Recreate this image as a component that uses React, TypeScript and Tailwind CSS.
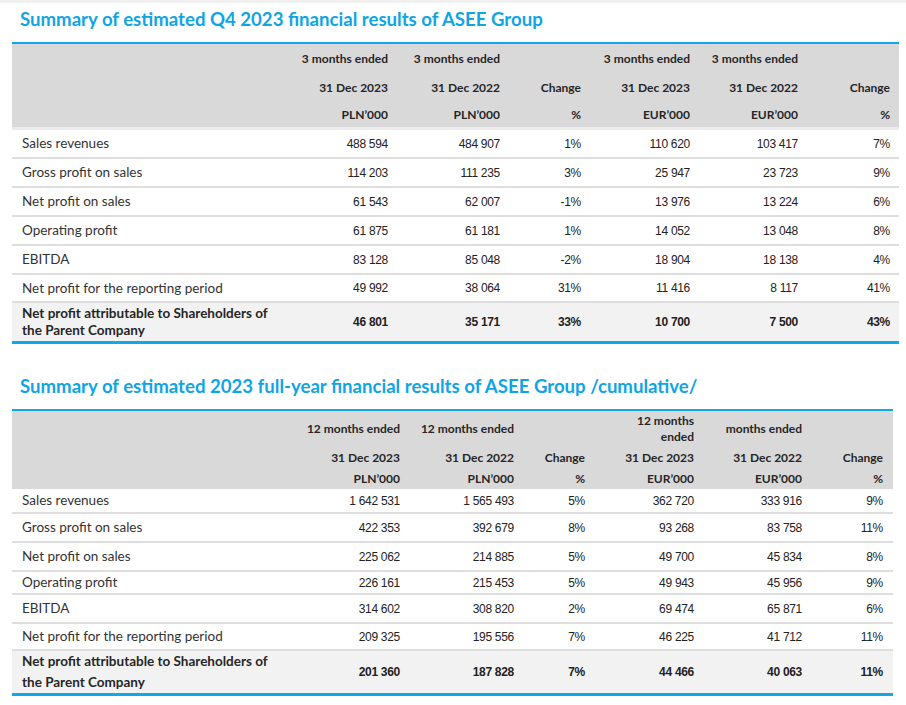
import React from "react";

/* ==== data ==== */

type Row = { label: string; v: string[]; bold?: boolean };

const q4Rows: Row[] = [
  { label: "Sales revenues", v: ["488 594", "484 907", "1%", "110 620", "103 417", "7%"] },
  { label: "Gross profit on sales", v: ["114 203", "111 235", "3%", "25 947", "23 723", "9%"] },
  { label: "Net profit on sales", v: ["61 543", "62 007", "-1%", "13 976", "13 224", "6%"] },
  { label: "Operating profit", v: ["61 875", "61 181", "1%", "14 052", "13 048", "8%"] },
  { label: "EBITDA", v: ["83 128", "85 048", "-2%", "18 904", "18 138", "4%"] },
  { label: "Net profit for the reporting period", v: ["49 992", "38 064", "31%", "11 416", "8 117", "41%"] },
];

const fyRows: Row[] = [
  { label: "Sales revenues", v: ["1 642 531", "1 565 493", "5%", "362 720", "333 916", "9%"] },
  { label: "Gross profit on sales", v: ["422 353", "392 679", "8%", "93 268", "83 758", "11%"] },
  { label: "Net profit on sales", v: ["225 062", "214 885", "5%", "49 700", "45 834", "8%"] },
  { label: "Operating profit", v: ["226 161", "215 453", "5%", "49 943", "45 956", "9%"] },
  { label: "EBITDA", v: ["314 602", "308 820", "2%", "69 474", "65 871", "6%"] },
  { label: "Net profit for the reporting period", v: ["209 325", "195 556", "7%", "46 225", "41 712", "11%"] },
];

// row heights include the 2px bottom rule
const q4Heights = ["h-[29px]", "h-[29px]", "h-[29px]", "h-[29px]", "h-[29px]", "h-[28px]"];
const fyHeights = ["h-[25px]", "h-[29px]", "h-[29px]", "h-[23px]", "h-[29px]", "h-[27px]"];

const cols1 = "grid grid-cols-[288px_88px_112px_81px_109px_108px_92px]";
const cols2 = "grid grid-cols-[288px_100px_114px_71px_109px_108px_81px]";

const title = "font-['Lato',sans-serif] font-bold text-[#0fa5e4] text-[18.6px] leading-none pl-[20px]";
const head = "font-['Lato',sans-serif] font-bold text-[12px] text-[#262626] text-right";
const num = "font-['Liberation_Sans',Arial,sans-serif] text-[12px] tracking-[-0.3px] text-[#222] text-right";
const lbl = "font-['Lato',sans-serif] text-[13.5px] text-[#333] pl-[10px]";

const DataRows: React.FC<{ rows: Row[]; cols: string; heights: string[] }> = ({ rows, cols, heights }) => (
  <>
    {rows.map((r, i) => (
      <div key={r.label} className={`${cols} items-center border-b-2 border-[#dedede] ${heights[i]}`}>
        <div className={lbl}>{r.label}</div>
        {r.v.map((x, j) => (
          <div key={j} className={num}>
            {x}
          </div>
        ))}
      </div>
    ))}
  </>
);

const TotalRow: React.FC<{ v: string[]; cols: string; h: string; lh: string }> = ({ v, cols, h, lh }) => (
  <div className={`${cols} items-center bg-[#f2f2f2] border-b-[3px] border-[#12a7e6] ${h}`}>
    <div className={`${lbl} font-bold text-[#262626] ${lh}`}>
      Net profit attributable to Shareholders of
      <br />
      the Parent Company
    </div>
    {v.map((x, j) => (
      <div key={j} className={`${num} font-bold`}>
        {x}
      </div>
    ))}
  </div>
);

export default function App() {
  return (
    <div className="w-[906px] h-[705px] bg-white border-t-[3px] border-[#f1f1f1] overflow-hidden">
      {/* ==== Q4 ==== */}
      <div className={`${title} pt-[7px] h-[39px]`}>
        Summary of estimated Q4 2023 financial results of ASEE Group
      </div>
      <div className="ml-[12px] w-[887px] border-t-2 border-[#12a7e6]">
        <div className="bg-[#d9d9d9] border-b-[3px] border-[#ececec]">
          <div className={`${cols1} items-center h-[29px]`}>
            <div />
            <div className={head}>3 months ended</div>
            <div className={head}>3 months ended</div>
            <div />
            <div className={head}>3 months ended</div>
            <div className={head}>3 months ended</div>
            <div />
          </div>
          <div className={`${cols1} items-center h-[29px]`}>
            <div />
            <div className={head}>31 Dec 2023</div>
            <div className={head}>31 Dec 2022</div>
            <div className={head}>Change</div>
            <div className={head}>31 Dec 2023</div>
            <div className={head}>31 Dec 2022</div>
            <div className={head}>Change</div>
          </div>
          <div className={`${cols1} items-center h-[25px]`}>
            <div />
            <div className={head}>PLN’000</div>
            <div className={head}>PLN’000</div>
            <div className={head}>%</div>
            <div className={head}>EUR’000</div>
            <div className={head}>EUR’000</div>
            <div className={head}>%</div>
          </div>
        </div>
        <DataRows rows={q4Rows} cols={cols1} heights={q4Heights} />
        <TotalRow
          cols={cols1}
          h="h-[41px]"
          lh="leading-[17px]"
          v={["46 801", "35 171", "33%", "10 700", "7 500", "43%"]}
        />
      </div>

      {/* ==== FULL YEAR ==== */}
      <div className={`${title} pt-[33px] h-[65px]`}>
        Summary of estimated 2023 full-year financial results of ASEE Group /cumulative/
      </div>
      <div className="ml-[12px] w-[881px] border-t-2 border-[#12a7e6]">
        <div className="bg-[#d9d9d9]">
          <div className={`${cols2} items-center h-[36px] leading-[16px]`}>
            <div />
            <div className={head}>12 months ended</div>
            <div className={head}>12 months ended</div>
            <div />
            <div className={head}>
              12 months
              <br />
              ended
            </div>
            <div className={head}>months ended</div>
            <div />
          </div>
          <div className={`${cols2} items-center h-[22px]`}>
            <div />
            <div className={head}>31 Dec 2023</div>
            <div className={head}>31 Dec 2022</div>
            <div className={head}>Change</div>
            <div className={head}>31 Dec 2023</div>
            <div className={head}>31 Dec 2022</div>
            <div className={head}>Change</div>
          </div>
          <div className={`${cols2} items-start h-[20px] pt-[1px]`}>
            <div />
            <div className={head}>PLN’000</div>
            <div className={head}>PLN’000</div>
            <div className={head}>%</div>
            <div className={head}>EUR’000</div>
            <div className={head}>EUR’000</div>
            <div className={head}>%</div>
          </div>
        </div>
        <DataRows rows={fyRows} cols={cols2} heights={fyHeights} />
        <TotalRow
          cols={cols2}
          h="h-[45px]"
          lh="leading-[21px]"
          v={["201 360", "187 828", "7%", "44 466", "40 063", "11%"]}
        />
      </div>
    </div>
  );
}
